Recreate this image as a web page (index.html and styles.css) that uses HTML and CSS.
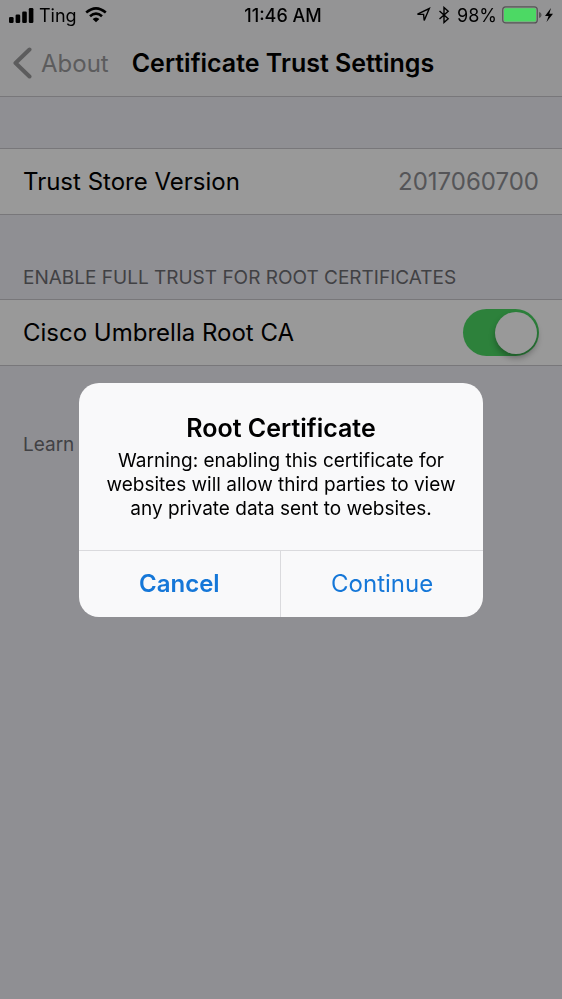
FILE: index.html
```html
<!DOCTYPE html>
<html lang="en">
<head>
    <meta charset="UTF-8">
    <meta name="viewport" content="width=device-width, initial-scale=1.0">
    <title>Certificate Trust Settings</title>
    <link rel="stylesheet" href="styles.css">
</head>
<body>
    <header class="top">
        <div class="status">
            <div class="status-left">
                <svg width="26" height="16" viewBox="0 0 26 16">
                    <rect x="1" y="10" width="4.600" height="6" rx="1.300"/>
                    <rect x="7.600" y="7.500" width="4.600" height="8.500" rx="1.300"/>
                    <rect x="14.200" y="4.500" width="4.600" height="11.500" rx="1.300"/>
                    <rect x="20.800" y="1" width="4.600" height="15" rx="1.300"/>
                </svg>
                <span>Ting</span>
                <svg class="wifi" width="22" height="16" viewBox="0 0 22 16">
                    <path d="M1.200 5.500Q11-2.800 20.800 5.500M5 9.300Q11 3.900 17 9.300" fill="none" stroke="#000" stroke-width="2.600"/>
                    <path d="M7.600 12Q11 8.800 14.400 12L11 15.200Z"/>
                </svg>
            </div>
            <span class="time">11:46 AM</span>
            <div class="status-right">
                <svg width="16" height="16" viewBox="0 0 16 16">
                    <path d="M2.500 7.200L14.300 1.500L9.200 13.500L8.600 7.400Z" fill="none" stroke="#000" stroke-width="1.400"/>
                </svg>
                <svg class="bluetooth" width="12" height="18" viewBox="0 0 12 18">
                    <path d="M1.500 5L10.200 12.800L6 16.500V1.500L10.200 5.200L1.500 13" fill="none" stroke="#000" stroke-width="1.400"/>
                </svg>
                <span>98%</span>
                <div class="power">
                    <svg width="41" height="18" viewBox="0 0 41 18">
                        <rect x=".700" y=".900" width="34.600" height="16" rx="3" fill="none" stroke="#555" stroke-width="1.200"/>
                        <rect x="2" y="2.200" width="32" height="13.400" rx="1.600" fill="#4cd964"/>
                        <path d="M37 6Q39.600 6.500 39.600 9T37 12Z" fill="#555"/>
                    </svg>
                    <svg width="10" height="16" viewBox="0 0 10 16">
                        <path d="M7 1L1 9H4.600L2.500 15L9 6.800H5.300Z"/>
                    </svg>
                </div>
            </div>
        </div>
        <nav class="nav">
            <a class="back" href="#">
                <svg width="20" height="32" viewBox="0 0 20 32">
                    <path d="M17.500 2.500L3.500 16L17.500 29.500" fill="none" stroke="currentColor" stroke-width="4" stroke-linecap="round" stroke-linejoin="round"/>
                </svg>
                About
            </a>
            <h1>Certificate Trust Settings</h1>
        </nav>
    </header>

    <main>
        <div class="row first">
            <span>Trust Store Version</span>
            <span class="value">2017060700</span>
        </div>
        <h2>ENABLE FULL TRUST FOR ROOT CERTIFICATES</h2>
        <div class="row">
            <label for="cisco">Cisco Umbrella Root CA</label>
            <input class="switch" type="checkbox" id="cisco" checked>
        </div>
        <p class="footnote">Learn</p>
    </main>

    <div class="overlay">
        <div class="alert" role="alertdialog" aria-labelledby="alert-title" aria-describedby="alert-text">
            <div class="alert-body">
                <h3 id="alert-title">Root Certificate</h3>
                <p id="alert-text">Warning: enabling this certificate for websites will allow third parties to view any private data sent to websites.</p>
            </div>
            <div class="alert-buttons">
                <button type="button" class="cancel">Cancel</button>
                <button type="button">Continue</button>
            </div>
        </div>
    </div>
</body>
</html>
```
FILE: styles.css
```css
* {
    box-sizing: border-box;
}

body {
    margin: 0;
    min-height: 100vh;
    background-color: #efeef5;
    color: #000;
    font-family: Inter, "Liberation Sans", sans-serif;
    font-size: 24px;
}

h1, h2, h3, p {
    margin: 0;
}

svg {
    flex: none;
}

.top {
    background-color: #f7f7f8;
    border-bottom: 1px solid #c8c7cc;
}

/* stays above the dimmed overlay */
.status {
    position: relative;
    z-index: 2;
    display: grid;
    grid-template-columns: 1fr auto 1fr;
    align-items: center;
    height: 30px;
    padding: 0 8px;
    font-size: 18px;
}

.status-left,
.status-right {
    display: flex;
    align-items: center;
    gap: 5px;
}

.status-right {
    justify-content: flex-end;
}

.wifi {
    margin-left: 3px;
}

.bluetooth {
    margin: 0 2px;
}

.power {
    display: flex;
    align-items: center;
    gap: 1px;
}

.time {
    padding-left: 4px;
    font-weight: 500;
}

.nav {
    display: flex;
    align-items: center;
    gap: 23px;
    height: 66px;
    padding: 0 12px;
}

.back {
    display: flex;
    align-items: center;
    gap: 9px;
    color: #9a9a9c;
    text-decoration: none;
}

h1, h3 {
    font-size: 25px;
    font-weight: 600;
    white-space: nowrap;
}

.row {
    display: flex;
    align-items: center;
    justify-content: space-between;
    height: 67px;
    padding: 0 23px;
    background-color: #fff;
    border-top: 1px solid #c8c7cc;
    border-bottom: 1px solid #c8c7cc;
}

.first {
    margin-top: 51px;
}

.value {
    color: #8e8e93;
}

h2 {
    padding: 51px 23px 9px;
    color: #6d6d72;
    font-size: 19px;
    font-weight: 400;
    line-height: 24px;
}

.switch {
    appearance: none;
    width: 76px;
    height: 47px;
    margin: 0;
    padding: 3px;
    border-radius: 24px;
    background-color: #4bd763;
}

.switch::before {
    content: "";
    display: block;
    width: 42px;
    height: 42px;
    border-radius: 50%;
    background-color: #fff;
    box-shadow: 0 4px 6px rgba(0, 0, 0, 0.3);
}

.switch:checked::before {
    margin-left: 29px;
}

.footnote {
    padding: 67px 23px;
    color: #6d6d72;
    font-size: 19px;
    line-height: 24px;
}

.overlay {
    position: fixed;
    inset: 0;
    z-index: 1;
    display: flex;
    align-items: center;
    justify-content: center;
    background-color: rgba(0, 0, 0, 0.4);
}

.alert {
    width: 72%;
    overflow: hidden;
    border-radius: 20px;
    background-color: #f9f9fa;
    text-align: center;
}

.alert-body {
    padding: 30px 20px 29px;
}

.alert h3 {
    line-height: 30px;
    margin-bottom: 6px;
}

.alert p {
    font-size: 19px;
    line-height: 24px;
}

.alert-buttons {
    display: grid;
    grid-template-columns: 1fr 1fr;
    border-top: 1px solid #dadadd;
}

button {
    height: 66px;
    padding: 0;
    border: 0;
    background: none;
    color: #1577d8;
    font-family: inherit;
    font-size: 24px;
}

.cancel {
    border-right: 1px solid #dadadd;
    font-weight: 600;
}
```
